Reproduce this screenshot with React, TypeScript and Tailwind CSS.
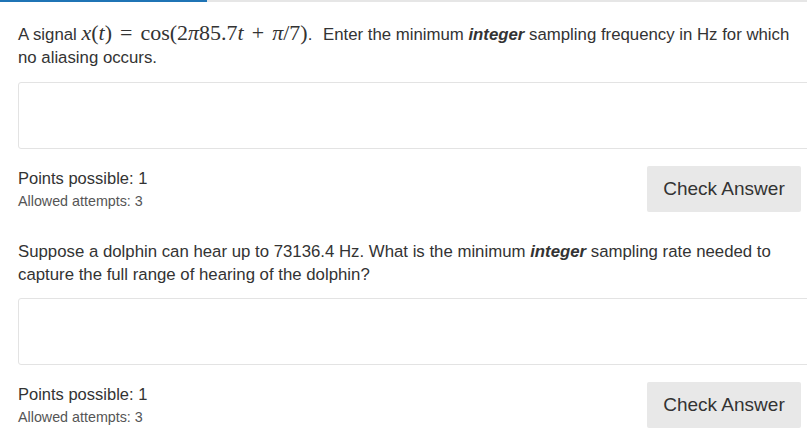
import React from "react";

const sans = "font-['Arial','Liberation_Sans',sans-serif]";

// KaTeX-ish inline formula for x(t) = cos(2π85.7t + π/7)
function MathSignal() {
  return (
    <span className="font-['Liberation_Serif','DejaVu_Serif',serif] text-[22px] leading-[0] whitespace-nowrap text-[#333]">
      <i>x</i>(<i>t</i>)<span className="mx-[8px]">=</span>cos(2<i>π</i>85.7<i>t</i>
      <span className="mx-[8px]">+</span>
      <i>π</i>/7)
    </span>
  );
}

function AnswerBlock({ gap }: { gap: string }) {
  return (
    <>
      <div className={`${gap} h-[67px] w-[820px] rounded-[3px] border border-[#e3e3e3] bg-white`} />
      <div className="mt-[17px] flex items-start justify-between">
        <div className="pt-[2px]">
          <p className="text-[16.5px] leading-[20px] text-[#333]">Points possible: 1</p>
          <p className="mt-[4px] text-[14.3px] leading-[18px] text-[#555]">Allowed attempts: 3</p>
        </div>
        <button className="h-[46px] w-[154px] rounded-[2px] bg-[#e8e8e8] text-[19px] text-[#333]">
          Check Answer
        </button>
      </div>
    </>
  );
}

export default function App() {
  return (
    <div className={`relative h-[436px] w-[807px] overflow-hidden bg-white ${sans}`}>
      <div className="flex h-[2px]">
        <div className="w-[207px] bg-[#1f74b5]" />
        <div className="flex-1 bg-[#e6e6e6]" />
      </div>

      <div className="w-[801px] pl-[18px]">
        {/* question 1 */}
        <section className="mt-[21px]">
          <p className="h-[46px] text-[16.8px] leading-[23px] text-[#333]">
            A signal <MathSignal />.<span className="ml-[6px]" /> Enter the minimum <b><i>integer</i></b> sampling
            frequency in Hz for which no aliasing occurs.
          </p>
          <AnswerBlock gap="mt-[13px]" />
        </section>

        {/* question 2 */}
        <section className="mt-[28px]">
          <p className="h-[46px] text-[16.8px] leading-[23px] text-[#333]">
            Suppose a dolphin can hear up to 73136.4 Hz. What is the minimum <b><i>integer</i></b> sampling rate
            needed to capture the full range of hearing of the dolphin?
          </p>
          <AnswerBlock gap="mt-[12px]" />
        </section>
      </div>
    </div>
  );
}
